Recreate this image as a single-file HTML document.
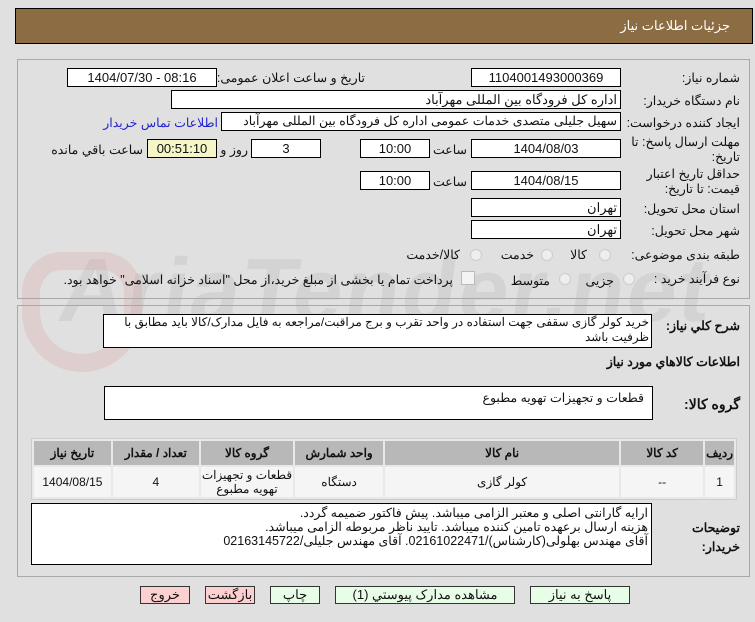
<!DOCTYPE html>
<html><head><meta charset="utf-8"><style>
body{margin:0;width:755px;height:622px;background:#e0e0e0;font-family:Tahoma,"Liberation Sans","Noto Sans CJK SC",sans-serif;font-size:12px;color:#111;position:relative;overflow:hidden}
.a{position:absolute;white-space:nowrap}
.box{position:absolute;background:#fff;border:1px solid #000;box-sizing:border-box;height:19px;line-height:17px;text-align:center;font-size:13px}
.lbl{position:absolute;white-space:nowrap;direction:rtl;text-align:right;font-size:12.5px}
.panel{position:absolute;border:1px solid #a8a8a8;box-sizing:border-box}
.rad{position:absolute;width:12px;height:12px;border-radius:50%;border:1px solid #ccc;background:#eee;box-sizing:border-box}
table{border-collapse:separate;border-spacing:2px;background:#e8e8e8;border:1px solid #ccc}
th{background:#b8b8b8;font-weight:bold;font-size:12px;height:22px}
td{background:#f5f5f5;text-align:center;font-size:12px;height:27px}
.btn{position:absolute;top:586px;height:18px;border:1px solid #333;box-sizing:border-box;text-align:center;line-height:16px;font-size:13px;background:#e8fde8}
.pink{background:#fcd0d0}
</style></head><body>
<div class="a" style="left:15px;top:8px;width:738px;height:36px;background:#8c6c42;border:1px solid #000;box-sizing:border-box"></div>
<div class="a" style="right:25px;top:18px;color:#fff;font-size:13px">جزئیات اطلاعات نیاز</div>
<div class="a" style="left:60px;top:240px;font-size:90px;font-weight:bold;color:#d3d3d3;font-family:'Liberation Sans',sans-serif;letter-spacing:2px;transform:skewX(-8deg)">AriaTender.net</div>
<div class="a" style="left:22px;top:252px;width:120px;height:120px;border:18px solid rgba(220,150,150,0.25);border-radius:40px 40px 60px 60px;box-sizing:border-box"></div>
<div class="panel" style="left:17px;top:59px;width:733px;height:240px"></div>
<div class="panel" style="left:17px;top:305px;width:733px;height:272px"></div>

<div class="lbl" style="right:15px;top:70px">شماره نیاز:</div>
<div class="box" style="left:471px;top:68px;width:150px">1104001493000369</div>
<div class="lbl" style="right:390px;top:70px">تاریخ و ساعت اعلان عمومی:</div>
<div class="box" style="left:67px;top:68px;width:150px">1404/07/30 - 08:16</div>

<div class="lbl" style="right:15px;top:93px">نام دستگاه خریدار:</div>
<div class="box" style="left:171px;top:90px;width:450px;text-align:right;padding-right:3px;direction:rtl">اداره کل فرودگاه بین المللی مهرآباد</div>

<div class="lbl" style="right:15px;top:115px">ایجاد کننده درخواست:</div>
<div class="box" style="left:221px;top:112px;width:400px;text-align:right;padding-right:3px;direction:rtl;font-size:12.5px">سهیل جلیلی متصدی خدمات عمومی اداره کل فرودگاه بین المللی مهرآباد</div>
<div class="lbl" style="right:537px;top:115px;color:#2323d0">اطلاعات تماس خریدار</div>

<div class="lbl" style="right:15px;top:135px;line-height:15px;text-align:right">مهلت ارسال پاسخ: تا<br>تاریخ:</div>
<div class="box" style="left:471px;top:139px;width:150px">1404/08/03</div>
<div class="lbl" style="right:288px;top:142px">ساعت</div>
<div class="box" style="left:360px;top:139px;width:70px">10:00</div>
<div class="box" style="left:251px;top:139px;width:70px">3</div>
<div class="lbl" style="right:507px;top:142px">روز و</div>
<div class="box" style="left:147px;top:139px;width:70px;background:#f5f5c8">00:51:10</div>
<div class="lbl" style="right:612px;top:142px">ساعت باقي مانده</div>

<div class="lbl" style="right:15px;top:167px;line-height:15px">حداقل تاریخ اعتبار<br>قیمت: تا تاریخ:</div>
<div class="box" style="left:471px;top:171px;width:150px">1404/08/15</div>
<div class="lbl" style="right:288px;top:174px">ساعت</div>
<div class="box" style="left:360px;top:171px;width:70px">10:00</div>

<div class="lbl" style="right:15px;top:201px">استان محل تحویل:</div>
<div class="box" style="left:471px;top:198px;width:150px;text-align:right;padding-right:3px">تهران</div>
<div class="lbl" style="right:15px;top:223px">شهر محل تحویل:</div>
<div class="box" style="left:471px;top:220px;width:150px;text-align:right;padding-right:3px">تهران</div>

<div class="lbl" style="right:15px;top:247px">طبقه بندی موضوعی:</div>
<div class="rad" style="left:599px;top:249px"></div><div class="lbl" style="right:168px;top:247px">کالا</div>
<div class="rad" style="left:541px;top:249px"></div><div class="lbl" style="right:221px;top:247px">خدمت</div>
<div class="rad" style="left:470px;top:249px"></div><div class="lbl" style="right:295px;top:247px">کالا/خدمت</div>

<div class="lbl" style="right:15px;top:271px">نوع فرآیند خرید :</div>
<div class="rad" style="left:623px;top:273px"></div><div class="lbl" style="right:141px;top:273px">جزیی</div>
<div class="rad" style="left:559px;top:273px"></div><div class="lbl" style="right:205px;top:273px">متوسط</div>
<div class="a" style="left:461px;top:271px;width:12px;height:12px;border:1px solid #bbb;background:#f4f4f4"></div>
<div class="lbl" style="right:302px;top:272px">پرداخت تمام یا بخشی از مبلغ خرید،از محل "اسناد خزانه اسلامی" خواهد بود.</div>

<div class="lbl" style="right:15px;top:318px;font-weight:bold">شرح کلي نیاز:</div>
<div class="a" style="left:103px;top:314px;width:549px;height:34px;border:1px solid #000;background:#fff;box-sizing:border-box;white-space:normal;direction:rtl;text-align:right;padding:0 2px;font-size:12px;line-height:15px;letter-spacing:-0.2px">خرید کولر گازی سقفی جهت استفاده در واحد تقرب و برج مراقبت/مراجعه به فایل مدارک/کالا باید مطابق با ظرفیت باشد</div>
<div class="lbl" style="right:15px;top:354px;font-weight:bold">اطلاعات کالاهاي مورد نیاز</div>
<div class="lbl" style="right:15px;top:396px;font-weight:bold;font-size:14px">گروه کالا:</div>
<div class="a" style="left:104px;top:386px;width:549px;height:34px;border:1px solid #000;background:#fff;box-sizing:border-box;direction:rtl;text-align:right;padding:3px 8px;font-size:12.5px">قطعات و تجهیزات تهویه مطبوع</div>

<table class="a" style="left:31px;top:438px;width:706px;direction:rtl">
<tr><th style="width:26px">ردیف</th><th style="width:80px">کد کالا</th><th style="width:232px">نام کالا</th><th style="width:86px">واحد شمارش</th><th style="width:84px">گروه کالا</th><th style="width:84px">تعداد / مقدار</th><th>تاریخ نیاز</th></tr>
<tr><td>1</td><td>--</td><td>کولر گازی</td><td>دستگاه</td><td style="line-height:14px">قطعات و تجهیزات<br>تهویه مطبوع</td><td>4</td><td>1404/08/15</td></tr>
</table>

<div class="lbl" style="right:15px;top:519px;font-weight:bold;line-height:19px">توضیحات<br>خریدار:</div>
<div class="a" style="left:31px;top:503px;width:621px;height:62px;border:1px solid #000;background:#fff;box-sizing:border-box;direction:rtl;text-align:right;padding:2px 3px;font-size:12.5px;line-height:14px;white-space:normal">ارایه گارانتی اصلی و معتبر الزامی میباشد. پیش فاکتور ضمیمه گردد.<br>هزینه ارسال برعهده تامین کننده میباشد. تایید ناظر مربوطه الزامی میباشد.<br>آقای مهندس بهلولی(کارشناس)/02161022471. آقای مهندس جلیلی/02163145722</div>

<div class="btn" style="left:530px;width:100px">پاسخ به نیاز</div>
<div class="btn" style="left:335px;width:180px">مشاهده مدارک پیوستي (1)</div>
<div class="btn" style="left:270px;width:50px">چاپ</div>
<div class="btn pink" style="left:205px;width:50px">بازگشت</div>
<div class="btn pink" style="left:140px;width:50px">خروج</div>
</body></html>
